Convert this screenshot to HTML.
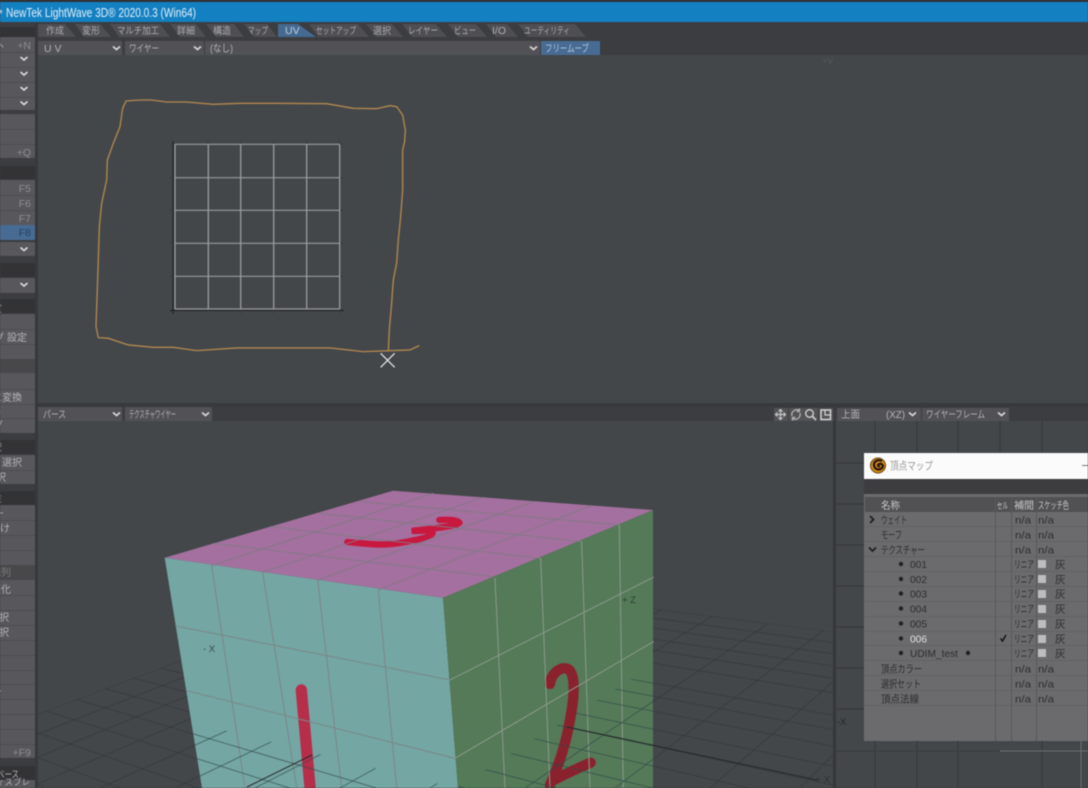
<!DOCTYPE html>
<html lang="ja"><head><meta charset="utf-8"><title>LightWave 3D</title>
<style>
html,body{margin:0;padding:0;background:#3c3d40;width:1088px;height:788px;overflow:hidden}
svg{display:block;filter:blur(.5px)}
text{font-family:"Liberation Sans","Noto Sans CJK JP",sans-serif;font-size:10px;fill:#b4b4b6}
.t text{font-size:9.5px;fill:#aeaeb0}
.k{fill:#8e8e90;font-size:10.5px}
.d text{fill:#2c2c2e;font-size:10.5px}
.c{fill:none;stroke:#d8d8d8;stroke-width:1.7}
</style></head><body>
<svg width="1088" height="788" viewBox="0 0 1088 788" xmlns="http://www.w3.org/2000/svg">
<defs>
<clipPath id="gc"><polygon points="38,714 406,576 833,632 833,788 38,788"/></clipPath>
<clipPath id="fr"><polygon points="191,722 455,788 653,666 653,788 200,788"/></clipPath>
<g id="gr" stroke-width="1" fill="none">
<path d="M38,528.3L833,632M38,534L833,642.5M38,540.2L833,653.7M38,546.9L833,666M38,553.7L833,678.3M38,561.6L833,692.8M38,573.9L833,715.1M38,581.9L833,729.6M38,591L833,746.3M38,602L833,766.4M38,612.3L833,785M38,624.6L748.6,788M38,638L652.6,788M38,653.4L555.9,788M38,669.9L464.5,788M38,688L376.2,788M38,708.3L289.6,788M38,733L198.5,788M38,757.8L120.2,788M38,785.2L45,788"/>
<path d="M833,416L38,714M833,424L38,734M833,433.4L38,757M833,444.3L38,783.7M833,457.4L100,788M833,472.7L175,788M833,491.3L255,788M833,514.2L340,788M833,542.9L430,788M833,579.8L525,788M833,623.2L615,788M833,681.8L710,788M833,755L800,788"/>
</g>
</defs>

<!-- base -->
<rect width="1088" height="788" fill="#3c3d40"/>
<rect width="1088" height="2" fill="#2f3033"/>
<rect y="2" width="1088" height="20" fill="#1380c2"/>
<text x="-2" y="18" style="font-size:12px;fill:#e8f2f8">*</text>
<text x="6" y="17" textLength="190" lengthAdjust="spacingAndGlyphs" style="font-size:12.5px;fill:#e4eff6">NewTek LightWave 3D® 2020.0.3 (Win64)</text>

<!-- viewports -->
<rect x="38" y="55" width="1050" height="348" fill="#43474a"/>
<rect x="38" y="421" width="796" height="367" fill="#43474a"/>
<rect x="836" y="421" width="252" height="367" fill="#43474a"/>
<rect x="35" y="22" width="3" height="766" fill="#37383a"/>
<rect x="38" y="403" width="1050" height="4" fill="#38393b"/>
<rect x="833" y="421" width="3" height="367" fill="#36373a"/>

<!-- tabs -->
<g fill="#4f4f53">
<polygon points="38,24 65,24 76,37 38,37"/>
<polygon points="75,24 100,24 111,37 84,37"/>
<polygon points="110,24 160,24 170,37 119,37"/>
<polygon points="170,24 196,24 206,37 180,37"/>
<polygon points="206,24 234,24 244,37 216,37"/>
<polygon points="244,24 267,24 277,37 254,37"/>
<polygon points="278,24 298,24 316,37 278,37" fill="#456a92"/>
<polygon points="309,24 358,24 369,37 318,37"/>
<polygon points="366,24 392,24 403,37 376,37"/>
<polygon points="402,24 436,24 447,37 412,37"/>
<polygon points="448,24 476,24 487,37 458,37"/>
<polygon points="486,24 507,24 518,37 496,37"/>
<polygon points="518,24 575,24 586,37 528,37"/>
</g>
<g class="t">
<text x="46" y="34" textLength="18" lengthAdjust="spacingAndGlyphs">作成</text>
<text x="82" y="34" textLength="18" lengthAdjust="spacingAndGlyphs">変形</text>
<text x="117" y="34" textLength="42" lengthAdjust="spacingAndGlyphs">マルチ加工</text>
<text x="177" y="34" textLength="18" lengthAdjust="spacingAndGlyphs">詳細</text>
<text x="213" y="34" textLength="18" lengthAdjust="spacingAndGlyphs">構造</text>
<text x="248" y="34" textLength="20" lengthAdjust="spacingAndGlyphs">マップ</text>
<text x="285" y="34" style="fill:#c0cfdd;font-size:10.5px">UV</text>
<text x="316" y="34" textLength="40" lengthAdjust="spacingAndGlyphs">セットアップ</text>
<text x="373" y="34" textLength="18" lengthAdjust="spacingAndGlyphs">選択</text>
<text x="408" y="34" textLength="30" lengthAdjust="spacingAndGlyphs">レイヤー</text>
<text x="454" y="34" textLength="22" lengthAdjust="spacingAndGlyphs">ビュー</text>
<text x="492" y="34" style="font-size:10.5px">I/O</text>
<text x="524" y="34" textLength="46" lengthAdjust="spacingAndGlyphs">ユーティリティ</text>
</g>

<!-- top dropdown row -->
<rect x="38" y="41" width="84" height="14" fill="#525256"/>
<rect x="125" y="41" width="79" height="14" fill="#525256"/>
<rect x="205" y="41" width="335" height="14" fill="#525256"/>
<rect x="541" y="41" width="59" height="14" fill="#486b94"/>
<text x="44" y="52" style="font-size:10.5px">U V</text>
<text x="129" y="52" textLength="30" lengthAdjust="spacingAndGlyphs">ワイヤー</text>
<text x="210" y="52" textLength="23" lengthAdjust="spacingAndGlyphs">(なし)</text>
<text x="545" y="52" textLength="44" lengthAdjust="spacingAndGlyphs" style="fill:#b9cadb">フリームーブ</text>
<path class="c" d="M113,46.5l3.5,3 3.5,-3M194,46.5l3.5,3 3.5,-3M530,46.5l3.5,3 3.5,-3"/>
<text x="822" y="64" style="font-size:9px;fill:#55585b">+V</text>

<!-- UV grid -->
<g fill="none">
<path d="M173,141V314M170,310.5H344" stroke="#1e1f21" stroke-width="1"/>
<path d="M170,144.3H343M170,177.7H343M170,210.3H343M170,243.3H343M170,276.3H343M208,141V313M240.7,141V313M273.7,141V313M306.7,141V313M339.7,141V313" stroke="#383a3c" stroke-width="1"/>
<path d="M175,144.3H339.7M175,177.7H339.7M175,210.3H339.7M175,243.3H339.7M175,276.3H339.7M175,309H339.7" stroke="#9a9d9e" stroke-width="1.2"/>
<path d="M175,144.3V309M208.3,144.3V309M240.7,144.3V309M273.7,144.3V309M306.7,144.3V309M339.7,144.3V309" stroke="#a2a5a6" stroke-width="1.2"/>
<g transform="translate(90,90) scale(.3333)">
<path stroke="#b3884f" stroke-width="4" stroke-linejoin="round" d="M895,785L898,720L905,640L910,570L920,520L925,450L932,380L938,300L938,180L944,155L946,120L938,75L920,50L900,47L860,56L790,55L710,41L560,40L450,40L370,43L290,36L230,36L185,30L150,30L108,33L98,55L90,110L70,160L52,210L50,270L35,340L28,410L24,540L18,710L25,743L55,745L115,765L190,772L250,772L320,782L440,774L620,774L720,774L820,785L960,780L988,767"/>
<path stroke="#dfe0e0" stroke-width="4" d="M872,790L914,832M914,790L872,832"/>
</g>
</g>

<!-- 3D view: ground -->
<g stroke="#34363a" stroke-opacity=".6" clip-path="url(#gc)"><use href="#gr"/></g>

<!-- cube -->
<polygon points="164.7,557.7 443,597.7 458,788 202,788" fill="#74a6a4"/>
<polygon points="443,597.7 653,510 653,788 458,788" fill="#547a58"/>
<polygon points="164.7,557.7 393,490.7 653,510 443,597.7" fill="#a4709f"/>

<g transform="translate(150,480) scale(.3333)" fill="none" stroke-linecap="round">
<!-- numbers -->
<path d="M592,186C640,190 700,200 760,187C810,178 848,170 848,158C848,150 810,152 785,153C830,146 915,142 928,128C925,120 890,118 868,120" stroke="#c8183f" stroke-width="19"/>
<path d="M454,630C460,700 470,810 480,920" stroke="#b62e4a" stroke-width="34"/>
<path d="M1200,612C1205,575 1240,555 1258,570C1278,590 1272,660 1260,720C1248,790 1225,860 1200,915M1212,900C1250,880 1290,862 1322,848" stroke="#8a222e" stroke-width="31"/>
<!-- top grid -->
<path stroke="#7f7a84" stroke-width="3" stroke-opacity=".9" d="M185,257L850,40M338,277L1000,52M503,300L1150,65M685,330L1320,78M190,190L1030,290M360,140L1170,235M510,100L1295,185M630,65L1408,135"/>
<!-- left grid -->
<path stroke="#7b8886" stroke-width="3.2" d="M185,257L285,924M338,277L440,924M503,300L575,924M685,330L740,924M78,438L900,600M110,632L915,835"/>
<!-- right grid -->
<path stroke="#8b9a8a" stroke-width="3" d="M1035,295L1065,924M1172,235L1200,924M1295,185L1320,924M1408,135L1420,924M900,600L1510,292M915,835L1510,485"/>
</g>
<g stroke="#2f4a48" stroke-opacity=".65" clip-path="url(#fr)"><use href="#gr"/></g>
<path d="M567,727L817,780M247,787L312,755" stroke="#26282a" stroke-width="1" fill="none"/>
<text x="203" y="652" style="font-size:9.5px;fill:#3a4a4a">- X</text>
<text x="622" y="603" style="font-size:9.5px;fill:#2c3f30">+ Z</text>
<text x="815" y="783" style="font-size:10px;fill:#2f3235">+ X</text>

<!-- second dropdown row -->
<rect x="38" y="407" width="84" height="14" fill="#525256"/>
<rect x="125" y="407" width="87" height="14" fill="#525256"/>
<rect x="837" y="408" width="84" height="13" fill="#525256"/>
<rect x="922" y="408" width="87" height="13" fill="#525256"/>
<text x="43" y="418" textLength="23" lengthAdjust="spacingAndGlyphs">パース</text>
<text x="129" y="418" textLength="47" lengthAdjust="spacingAndGlyphs">テクスチャワイヤー</text>
<text x="841" y="418" textLength="19" lengthAdjust="spacingAndGlyphs">上面</text>
<text x="886" y="418" textLength="19" lengthAdjust="spacingAndGlyphs">(XZ)</text>
<text x="926" y="418" textLength="59" lengthAdjust="spacingAndGlyphs">ワイヤーフレーム</text>
<path class="c" d="M113,412.5l3.5,3 3.5,-3M202,412.5l3.5,3 3.5,-3M909,412.5l3.5,3 3.5,-3M998,412.5l3.5,3 3.5,-3"/>
<g>
<rect x="774" y="408" width="14" height="13" fill="#535356"/>
<rect x="789" y="408" width="14" height="13" fill="#535356"/>
<rect x="803" y="408" width="15" height="13" fill="#535356"/>
<rect x="819" y="408" width="14" height="13" fill="#535356"/>
<path d="M780.5,409.5v10M775.5,414.5h10M778.5,411.5l2,-2 2,2M778.5,417.5l2,2 2,-2M777.5,412.5l-2,2 2,2M783.5,412.5l2,2 -2,2" stroke="#c8c8c8" stroke-width="1.2" fill="none"/>
<path d="M792,416a5,5 0 0 1 7.5,-5.5M800,413a5,5 0 0 1 -7.5,5.5M799.5,408.5v3h-3M792.5,420.500v-3h3" stroke="#b8b8b8" stroke-width="1.2" fill="none"/>
<circle cx="809.500" cy="413.500" r="3.800" stroke="#d0d0d0" stroke-width="1.400" fill="none"/>
<path d="M812.500,416.500l3.500,3.500" stroke="#d0d0d0" stroke-width="1.600"/>
<rect x="821" y="410" width="9.500" height="9.500" fill="none" stroke="#d4d4d4" stroke-width="1.500"/>
<path d="M825,410.500v4.500h5" stroke="#d4d4d4" stroke-width="1.200" fill="none"/>
</g>

<!-- right viewport grid -->
<path d="M875,421V788M917,421V788M958,421V788M1000,421V740M1042,421V788M836,463H1088M836,504H1088M836,545H1088M836,586H1088M836,627H1088M836,668H1088M836,709H1088" stroke="#36383b" stroke-width="1" fill="none"/>
<path d="M836,751H1000" stroke="#3a3c3f" fill="none"/>
<path d="M1000,751H1088M1081,741V788" stroke="#6b6f73" stroke-width="1" fill="none"/>
<text x="837" y="725" style="font-size:9.5px;fill:#26282a">-X</text>

<!-- dialog -->
<rect x="864" y="453" width="224" height="288" fill="#6b6b6d"/>
<rect x="864" y="453" width="224" height="26" fill="#fbfbfb"/>
<rect x="864" y="479" width="224" height="15" fill="#3d3d3f"/>
<rect x="865" y="497" width="223" height="15" fill="#515153"/>
<circle cx="878" cy="465.500" r="7.500" fill="#d98a14"/>
<circle cx="878" cy="465.500" r="7.500" fill="none" stroke="#5f4010" stroke-width="1"/>
<path d="M882,461c-4,-2 -8,0 -8,4c0,4 5,6 8,3c2,-2 0,-5 -3,-4c-2,1 -1,3 1,2" stroke="#20170a" stroke-width="2.200" fill="none"/>
<text x="890" y="469.500" textLength="43" lengthAdjust="spacingAndGlyphs" style="font-size:11px;fill:#9a9a9a">頂点マップ</text>
<path d="M1082,465.500H1088" stroke="#777"/>
<path d="M865,526.500H1088M865,541.500H1088M865,556.500H1088M865,571.500H1088M865,586.500H1088M865,601.500H1088M865,616.500H1088M865,631.500H1088M865,645.500H1088M865,660.500H1088M865,675.500H1088M865,690.500H1088M865,705.500H1088" stroke="#636365" fill="none"/>
<path d="M995.500,497V741M1011.500,497V741M1036.500,497V741" stroke="#59595b" fill="none"/>
<text x="881" y="509" textLength="19" lengthAdjust="spacingAndGlyphs" style="fill:#c8c8c8">名称</text>
<text x="997" y="509" textLength="11" lengthAdjust="spacingAndGlyphs" style="font-size:9px;fill:#c8c8c8">セル</text>
<text x="1014" y="509" textLength="20" lengthAdjust="spacingAndGlyphs" style="fill:#c8c8c8">補間</text>
<text x="1038" y="509" textLength="31" lengthAdjust="spacingAndGlyphs" style="fill:#c8c8c8">スケッチ色</text>
<g class="d">
<text x="881" y="523.500" textLength="26" lengthAdjust="spacingAndGlyphs">ウェイト</text>
<text x="881" y="538.500" textLength="21" lengthAdjust="spacingAndGlyphs">モーフ</text>
<text x="881" y="553.500" textLength="44" lengthAdjust="spacingAndGlyphs">テクスチャー</text>
<text x="910" y="568" textLength="17" lengthAdjust="spacingAndGlyphs">001</text>
<text x="910" y="583" textLength="17" lengthAdjust="spacingAndGlyphs">002</text>
<text x="910" y="597.500" textLength="17" lengthAdjust="spacingAndGlyphs">003</text>
<text x="910" y="612.500" textLength="17" lengthAdjust="spacingAndGlyphs">004</text>
<text x="910" y="627.500" textLength="17" lengthAdjust="spacingAndGlyphs">005</text>
<text x="910" y="642.500" textLength="17" lengthAdjust="spacingAndGlyphs" style="fill:#e2e2e2">006</text>
<text x="910" y="657" textLength="48" lengthAdjust="spacingAndGlyphs">UDIM_test</text>
<text x="881" y="672.500" textLength="41" lengthAdjust="spacingAndGlyphs">頂点カラー</text>
<text x="881" y="687.500" textLength="40" lengthAdjust="spacingAndGlyphs">選択セット</text>
<text x="881" y="702.500" textLength="38" lengthAdjust="spacingAndGlyphs">頂点法線</text>
<text x="1015" y="523.500" textLength="16" lengthAdjust="spacingAndGlyphs">n/a</text><text x="1038" y="523.500" textLength="16" lengthAdjust="spacingAndGlyphs">n/a</text>
<text x="1015" y="538.500" textLength="16" lengthAdjust="spacingAndGlyphs">n/a</text><text x="1038" y="538.500" textLength="16" lengthAdjust="spacingAndGlyphs">n/a</text>
<text x="1015" y="553.500" textLength="16" lengthAdjust="spacingAndGlyphs">n/a</text><text x="1038" y="553.500" textLength="16" lengthAdjust="spacingAndGlyphs">n/a</text>
<text x="1015" y="672.500" textLength="16" lengthAdjust="spacingAndGlyphs">n/a</text><text x="1038" y="672.500" textLength="16" lengthAdjust="spacingAndGlyphs">n/a</text>
<text x="1015" y="687.500" textLength="16" lengthAdjust="spacingAndGlyphs">n/a</text><text x="1038" y="687.500" textLength="16" lengthAdjust="spacingAndGlyphs">n/a</text>
<text x="1015" y="702.500" textLength="16" lengthAdjust="spacingAndGlyphs">n/a</text><text x="1038" y="702.500" textLength="16" lengthAdjust="spacingAndGlyphs">n/a</text>
<text x="1014" y="568" textLength="20" lengthAdjust="spacingAndGlyphs">リニア</text><text x="1055" y="568">灰</text>
<text x="1014" y="583" textLength="20" lengthAdjust="spacingAndGlyphs">リニア</text><text x="1055" y="583">灰</text>
<text x="1014" y="597.500" textLength="20" lengthAdjust="spacingAndGlyphs">リニア</text><text x="1055" y="597.500">灰</text>
<text x="1014" y="612.500" textLength="20" lengthAdjust="spacingAndGlyphs">リニア</text><text x="1055" y="612.500">灰</text>
<text x="1014" y="627.500" textLength="20" lengthAdjust="spacingAndGlyphs">リニア</text><text x="1055" y="627.500">灰</text>
<text x="1014" y="642.500" textLength="20" lengthAdjust="spacingAndGlyphs">リニア</text><text x="1055" y="642.500">灰</text>
<text x="1014" y="657" textLength="20" lengthAdjust="spacingAndGlyphs">リニア</text><text x="1055" y="657">灰</text>
</g>
<g fill="#bdbdbd">
<rect x="1038" y="560" width="8" height="8"/><rect x="1038" y="575" width="8" height="8"/><rect x="1038" y="590" width="8" height="8"/><rect x="1038" y="605" width="8" height="8"/><rect x="1038" y="620" width="8" height="8"/><rect x="1038" y="635" width="8" height="8"/><rect x="1038" y="649" width="8" height="8"/>
</g>
<g fill="#222">
<circle cx="901" cy="564" r="2.200"/><circle cx="901" cy="579" r="2.200"/><circle cx="901" cy="593.500" r="2.200"/><circle cx="901" cy="608.500" r="2.200"/><circle cx="901" cy="623.500" r="2.200"/><circle cx="901" cy="638.500" r="2.200"/><circle cx="901" cy="653" r="2.200"/><circle cx="968" cy="653" r="2.200"/>
</g>
<path d="M870,516l3.500,3.500 -3.500,3.500M869,547.500l3.500,3.500 3.500,-3.500" stroke="#1e1e1e" stroke-width="1.800" fill="none"/>
<path d="M1000.500,638.500l2,2.500 3.500,-6" stroke="#151515" stroke-width="1.500" fill="none"/>

<!-- left panel -->
<g fill="#333336">
<rect y="27" width="35" height="10"/><rect y="166" width="35" height="13"/><rect y="263" width="35" height="14"/>
<rect y="299" width="35" height="14"/><rect y="440" width="35" height="14"/><rect y="491" width="35" height="14"/>
<rect y="766" width="35" height="14"/>
</g>
<g fill="#58585c">
<rect y="37" width="35" height="73" rx="1.500"/>
<rect y="114" width="35" height="44" rx="1.500"/>
<rect y="180" width="35" height="60" rx="1.500"/>
<rect y="242" width="35" height="14" rx="1.500"/>
<rect y="278" width="35" height="15" rx="1.500"/>
<rect y="314" width="35" height="119" rx="1.500"/>
<rect y="455" width="35" height="29" rx="1.500"/>
<rect y="505" width="35" height="253" rx="1.500"/>
<rect y="780" width="35" height="8"/>
</g>
<rect y="359" width="35" height="14" fill="#48484b"/>
<rect y="565" width="35" height="15" fill="#48484b"/>
<rect y="225" width="35" height="15" rx="1.500" fill="#486b94"/>
<path d="M0,52.500H35M0,67.500H35M0,82.500H35M0,97.500H35M0,129.500H35M0,144.500H35M0,195.500H35M0,210.500H35M0,329.500H35M0,344.500H35M0,389.500H35M0,404.500H35M0,418.500H35M0,470.500H35M0,520.500H35M0,535.500H35M0,550.500H35M0,595.500H35M0,610.500H35M0,625.500H35M0,640.500H35M0,655.500H35M0,670.500H35M0,684.500H35M0,699.500H35M0,714.500H35M0,729.500H35M0,744.500H35" stroke="#4e4e52" fill="none"/>
<path class="c" d="M20.500,57l3.500,3 3.500,-3M20.500,72l3.500,3 3.500,-3M20.500,87l3.500,3 3.500,-3M20.500,101.500l3.500,3 3.500,-3M20.500,247.500l3.500,3 3.500,-3M20.500,283l3.500,3 3.500,-3"/>
<text class="k" x="31" y="49" text-anchor="end">+N</text>
<text x="-6" y="48" style="fill:#a8a8a8">へ</text>
<text class="k" x="31" y="156" text-anchor="end">+Q</text>
<text class="k" x="31" y="192" text-anchor="end">F5</text>
<text class="k" x="31" y="207" text-anchor="end">F6</text>
<text class="k" x="31" y="222" text-anchor="end">F7</text>
<text class="k" x="31" y="236" text-anchor="end" style="fill:#24405f">F8</text>
<text x="2" y="312" text-anchor="end" style="fill:#8d8d8d">定</text>
<text x="27" y="341" text-anchor="end">グ 設定</text>
<text x="22" y="401" text-anchor="end">に変換</text>
<text x="1" y="415" text-anchor="end">み</text>
<text x="3" y="429" text-anchor="end">グ</text>
<text x="2" y="451" text-anchor="end" style="fill:#8d8d8d">択</text>
<text x="22" y="466" text-anchor="end">ト 選択</text>
<text x="6" y="481" text-anchor="end">択</text>
<text x="2" y="502" text-anchor="end" style="fill:#8d8d8d">性</text>
<text x="4" y="517" text-anchor="end">ー</text>
<text x="10" y="532" text-anchor="end">付け</text>
<text x="11" y="576" text-anchor="end" style="fill:#7e7e80">配列</text>
<text x="11" y="593" text-anchor="end">適化</text>
<text x="9" y="621" text-anchor="end">選択</text>
<text x="9" y="636" text-anchor="end">選択</text>
<text x="2" y="695" text-anchor="end">ー</text>
<text class="k" x="31" y="756" text-anchor="end">+F9</text>
<text x="-3" y="778" textLength="22" lengthAdjust="spacingAndGlyphs" style="fill:#b0b0b0">ベース</text>
<text x="30" y="785" text-anchor="end" style="font-size:8.500px">ディスプレ</text>
</svg>
</body></html>
